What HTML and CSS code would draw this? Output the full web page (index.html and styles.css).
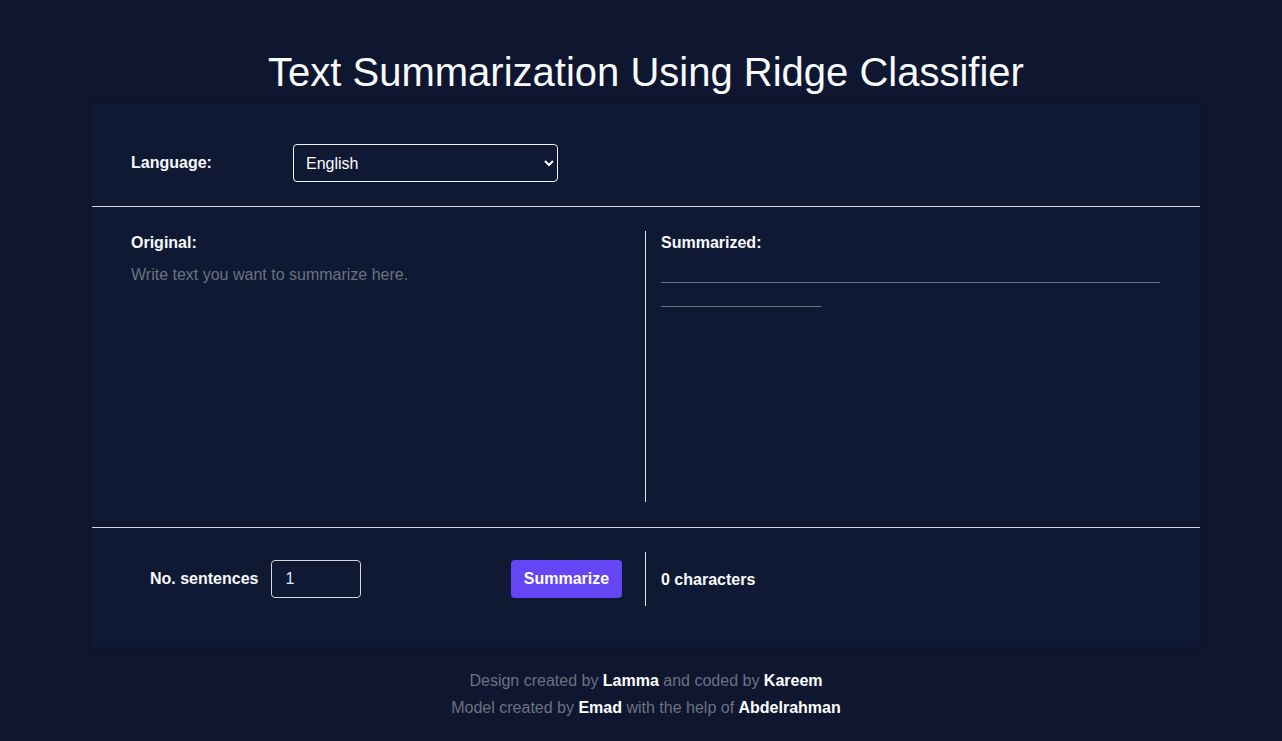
FILE: index.html
```html
<!DOCTYPE html>
<html lang="en">
<head>
<meta charset="utf-8">
<title>Text Summarization Using Ridge Classifier</title>
<link rel="stylesheet" href="styles.css">
</head>
<body>
<div class="page">
  <h1 class="title">Text Summarization Using Ridge Classifier</h1>
  <main class="card">
    <section class="lang-row">
      <label class="label lang-label" for="lang">Language:</label>
      <select id="lang" class="lang-select">
        <option>English</option>
        <option>Arabic</option>
      </select>
    </section>
    <section class="texts">
      <div class="col col-left">
        <div class="label">Original:</div>
        <textarea class="source" placeholder="Write text you want to summarize here."></textarea>
      </div>
      <div class="col col-right">
        <div class="label">Summarized:</div>
        <div class="skeleton">
          <div class="sk-line sk-long"></div>
          <div class="sk-line sk-short"></div>
        </div>
      </div>
    </section>
    <section class="controls">
      <div class="ctrl-left">
        <label class="label" for="num">No. sentences</label>
        <input id="num" class="num-input" type="text" value="1">
        <button class="btn">Summarize</button>
      </div>
      <div class="ctrl-right">
        <span class="label">0 characters</span>
      </div>
    </section>
  </main>
  <footer class="footer">
    <p>Design created by <b>Lamma</b> and coded by <b>Kareem</b></p>
    <p>Model created by <b>Emad</b> with the help of <b>Abdelrahman</b></p>
  </footer>
</div>
</body>
</html>
```

FILE: styles.css
```css
* { box-sizing: border-box; }

html, body {
  margin: 0;
  padding: 0;
  background: #0f1730;
  color: #ffffff;
  font-family: "Liberation Sans", Arial, sans-serif;
  font-size: 16px;
}

.page {
  width: 1108px;
  margin-left: 92px;
  padding-top: 48px;
}

.title {
  margin: 0 0 8px 0;
  font-size: 40px;
  font-weight: 400;
  line-height: 48px;
  text-align: center;
  color: #f8fafc;
}

.card {
  background: #101933;
  box-shadow: 0 0 6px rgba(0, 0, 0, 0.15);
}

.label {
  font-weight: 700;
  line-height: 24px;
  color: #f8fafc;
}

.lang-row {
  display: flex;
  align-items: center;
  padding: 40px 39px 24px 39px;
  border-bottom: 1px solid #d4d6dc;
}

.lang-label {
  width: 162px;
}

.lang-select {
  width: 265px;
  height: 38px;
  padding: 0 8px 0 8px;
  border: 1px solid #f1f5f9;
  border-radius: 4px;
  background-color: transparent;
  color: #ffffff;
  font-family: "Liberation Sans", Arial, sans-serif;
  font-size: 16px;
  color-scheme: dark;
}

.texts {
  display: flex;
  padding: 24px 0 25px 0;
  border-bottom: 1px solid #d4d6dc;
}

.col {
  height: 271px;
  display: flex;
  flex-direction: column;
}

.col-left {
  width: 553px;
  padding-left: 39px;
  padding-right: 20px;
}

.col-right {
  flex: 1;
  border-left: 1px solid #e5e7eb;
  padding-left: 15px;
}

.source {
  flex: 1;
  margin-top: 8px;
  padding: 0;
  border: none;
  outline: none;
  resize: none;
  background: transparent;
  color: #f8fafc;
  font-family: "Liberation Sans", Arial, sans-serif;
  font-size: 16px;
  line-height: 24px;
}

.source::placeholder {
  color: #6b7280;
}

.skeleton {
  padding-top: 27px;
  display: flex;
  flex-direction: column;
  gap: 23px;
}

.sk-line {
  height: 1px;
  background: #6b7280;
}

.sk-long { width: 499px; }
.sk-short { width: 160px; }

.controls {
  display: flex;
  padding: 24px 0 41px 0;
}

.ctrl-left {
  width: 553px;
  height: 54px;
  display: flex;
  align-items: center;
  padding-left: 58px;
  padding-right: 23px;
}

.num-input {
  width: 90px;
  height: 38px;
  margin-left: 13px;
  padding: 0 13px;
  border: 1px solid #d4d6dc;
  border-radius: 4px;
  background: transparent;
  color: #dbeafe;
  font-family: "Liberation Sans", Arial, sans-serif;
  font-size: 16px;
  outline: none;
}

.btn {
  margin-left: auto;
  width: 111px;
  height: 38px;
  border: none;
  border-radius: 4px;
  background: #6546f4;
  color: #ffffff;
  font-family: "Liberation Sans", Arial, sans-serif;
  font-size: 16px;
  font-weight: 700;
  padding: 0;
}

.ctrl-right {
  flex: 1;
  height: 54px;
  display: flex;
  align-items: center;
  border-left: 1px solid #e5e7eb;
  padding-left: 15px;
  padding-top: 2px;
}

.footer {
  margin-top: 20px;
  text-align: center;
  color: #6b7280;
  line-height: 27px;
}

.footer p {
  margin: 0;
}

.footer b {
  color: #ffffff;
}
```
